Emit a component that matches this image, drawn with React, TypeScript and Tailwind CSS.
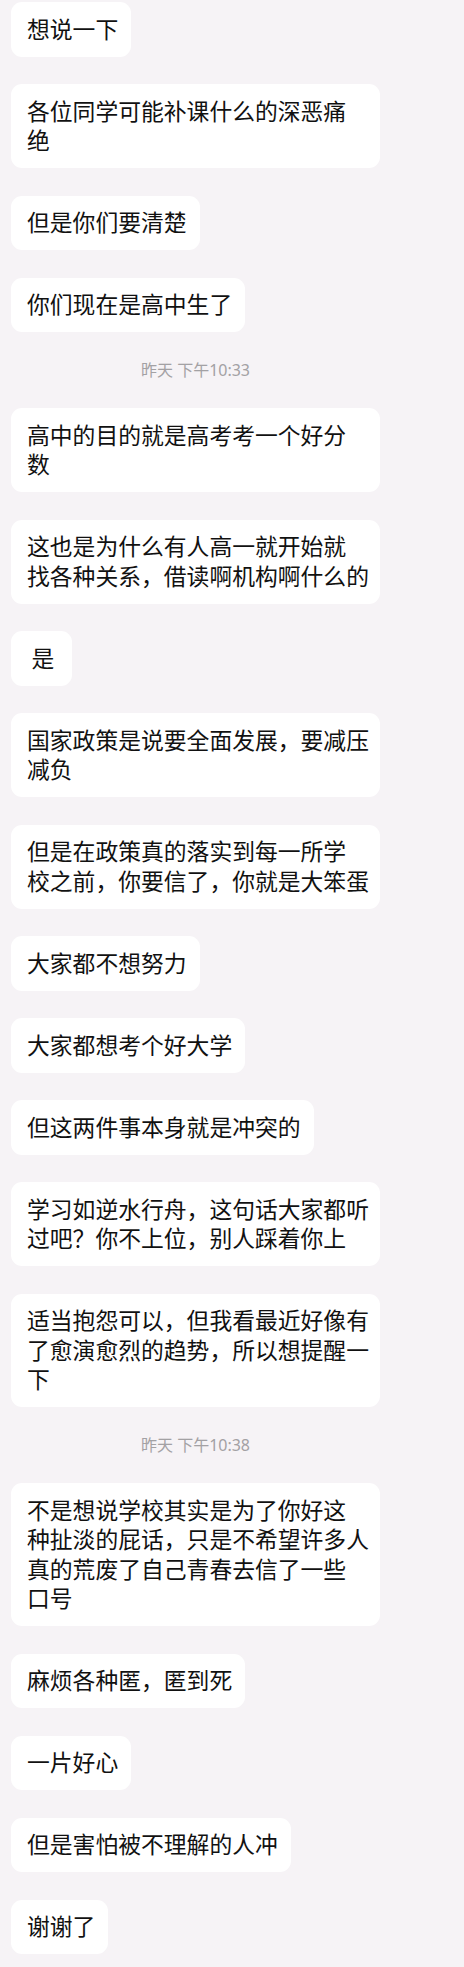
const messages: (string[] | { time: string })[] = [
  ['想说一下'],
  ['各位同学可能补课什么的深恶痛', '绝'],
  ['但是你们要清楚'],
  ['你们现在是高中生了'],
  { time: '昨天 下午10:33' },
  ['高中的目的就是高考考一个好分', '数'],
  ['这也是为什么有人高一就开始就', '找各种关系，借读啊机构啊什么的'],
  ['是'],
  ['国家政策是说要全面发展，要减压', '减负'],
  ['但是在政策真的落实到每一所学', '校之前，你要信了，你就是大笨蛋'],
  ['大家都不想努力'],
  ['大家都想考个好大学'],
  ['但这两件事本身就是冲突的'],
  ['学习如逆水行舟，这句话大家都听', '过吧？你不上位，别人踩着你上'],
  ['适当抱怨可以，但我看最近好像有', '了愈演愈烈的趋势，所以想提醒一', '下'],
  { time: '昨天 下午10:38' },
  ['不是想说学校其实是为了你好这', '种扯淡的屁话，只是不希望许多人', '真的荒废了自己青春去信了一些', '口号'],
  ['麻烦各种匿，匿到死'],
  ['一片好心'],
  ['但是害怕被不理解的人冲'],
  ['谢谢了'],
];

export default function App() {
  return (
    <div className="min-h-[1967px] w-full bg-[#f6f3f6] font-['Noto_Sans','Noto_Sans_CJK_SC',sans-serif]">
      <div className="flex w-[391px] flex-col items-start gap-[27.5px] px-[11px] pt-[2px] pb-4">
        {messages.map((m, i) =>
          Array.isArray(m) ? (
            <div
              key={i}
              className={`rounded-[11px] bg-white py-[12.5px] pl-4 pr-[13px] text-[22.8px] leading-[29.5px] text-[#111] ${
                m.length > 1 ? 'w-[369px] text-left' : 'min-w-[61px] text-center'
              }`}
            >
              {m.map((line, j) => (
                <div key={j} className="whitespace-nowrap">
                  {line}
                </div>
              ))}
            </div>
          ) : (
            <div
              key={i}
              className="w-[369px] text-center text-[16px] leading-[21px] text-[#a3a1a4]"
            >
              {m.time}
            </div>
          ),
        )}
      </div>
    </div>
  );
}
